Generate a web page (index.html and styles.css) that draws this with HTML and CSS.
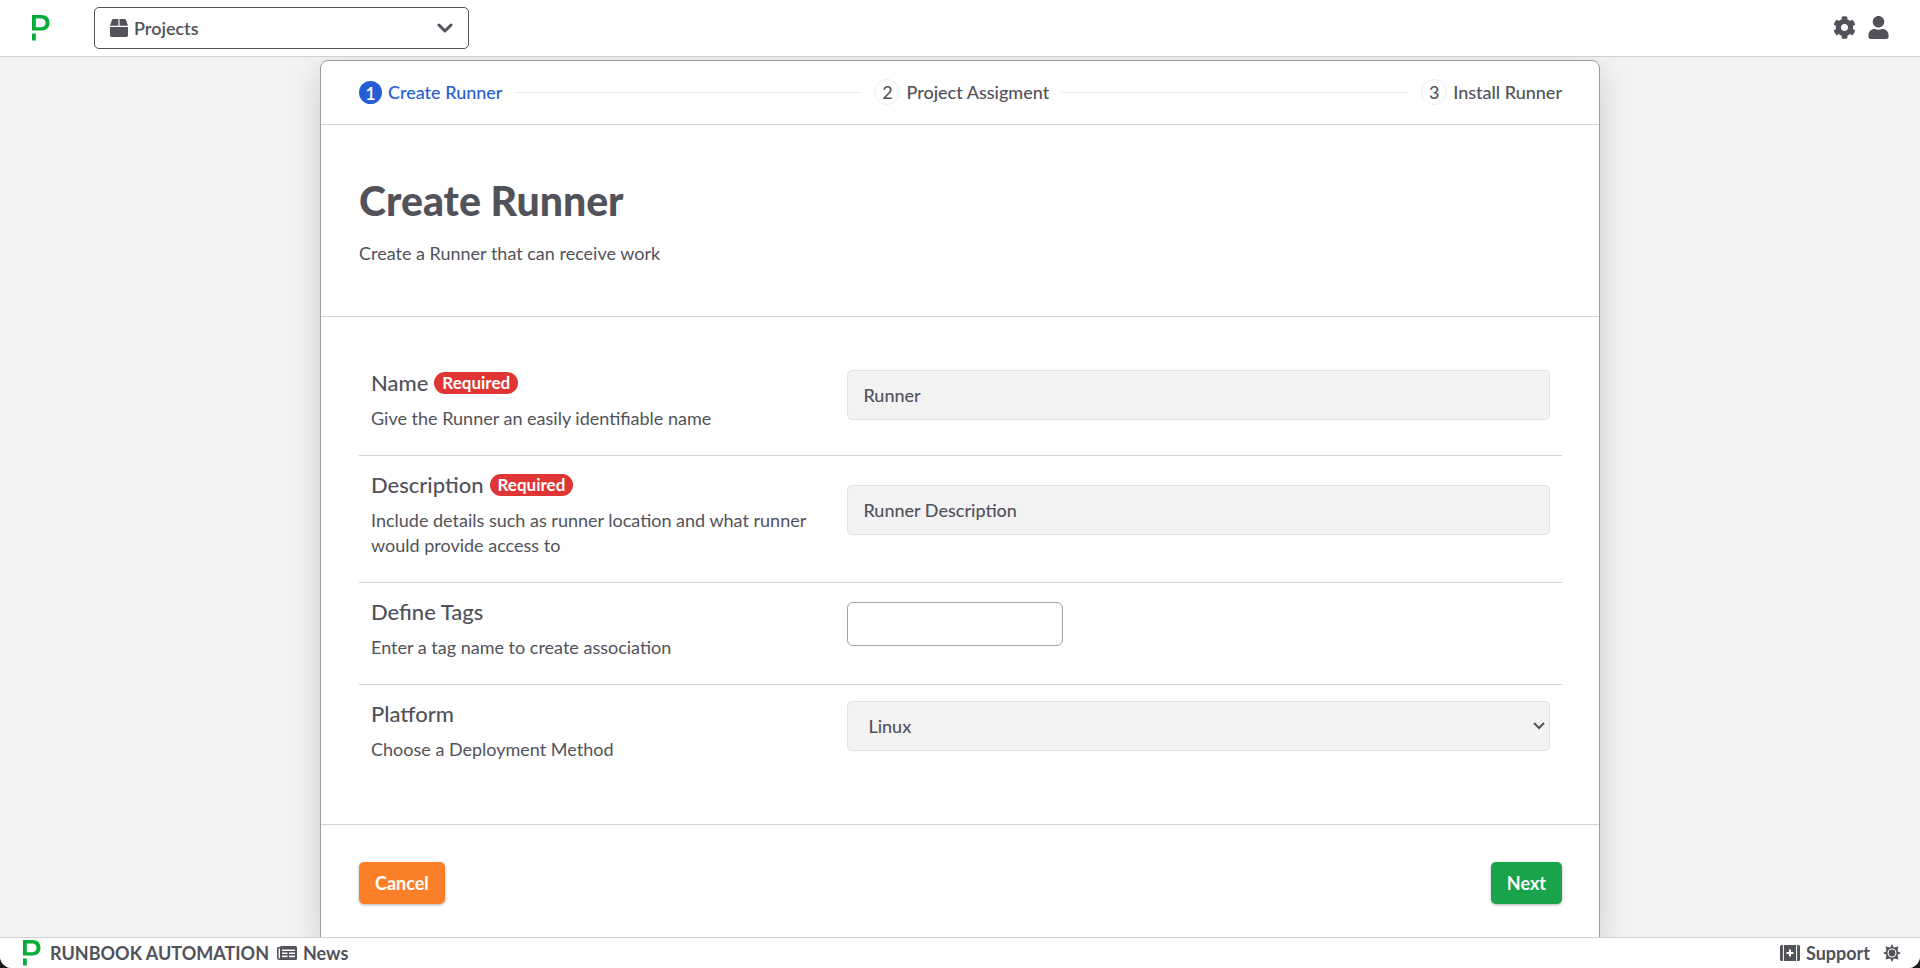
FILE: index.html
```html
<!DOCTYPE html>
<html lang="en">
<head>
<meta charset="utf-8">
<title>Create Runner</title>
<link rel="stylesheet" href="styles.css">
</head>
<body>
<div class="app">
  <header class="topbar">
    <a class="logo-link" href="#" aria-label="Home">
      <svg class="logo" viewBox="0 0 18 26" aria-hidden="true"><path fill-rule="evenodd" d="M0 0H9.5C14.5 0 17.5 3 17.5 7.8S14.5 15.5 9.5 15.5H0ZM3.8 3.4V12.2H9.2C12 12.2 13.6 10.6 13.6 7.8S12 3.4 9.2 3.4ZM0 18.5H3.8V25.5H0Z"/></svg>
    </a>
    <button class="project-picker" type="button">
      <svg class="icon-box" viewBox="0 0 512 512" aria-hidden="true"><path d="M509.5 184.6L458.9 32.8C452.4 13.2 434.1 0 413.4 0H272v192h238.7c-.4-2.5-.4-5-1.2-7.4zM240 0H98.6c-20.7 0-39 13.2-45.5 32.8L2.5 184.6c-.8 2.4-.8 4.9-1.2 7.4H240V0zM0 224v240c0 26.5 21.5 48 48 48h416c26.5 0 48-21.5 48-48V224H0z"/></svg>
      <span class="picker-label">Projects</span>
      <svg class="icon-chevron" viewBox="0 0 16 10" aria-hidden="true"><path d="M2 2l6 6 6-6"/></svg>
    </button>
    <nav class="top-actions">
      <a href="#" aria-label="Settings"><svg class="icon-top" viewBox="0 0 512 512" aria-hidden="true"><path d="M487.4 315.7l-42.6-24.6c4.3-23.2 4.3-47 0-70.2l42.6-24.6c4.9-2.8 7.1-8.6 5.5-14-11.1-35.6-30-67.8-54.7-94.6-3.8-4.1-10-5.1-14.8-2.3L380.8 110c-17.9-15.4-38.5-27.3-60.8-35.1V25.8c0-5.6-3.9-10.5-9.4-11.7-36.7-8.2-74.3-7.8-109.2 0-5.5 1.2-9.4 6.1-9.4 11.7V75c-22.2 7.9-42.8 19.8-60.8 35.1L88.7 85.5c-4.9-2.8-11-1.9-14.8 2.3-24.7 26.7-43.6 58.9-54.7 94.6-1.7 5.4.6 11.2 5.5 14L67.3 221c-4.3 23.2-4.3 47 0 70.2l-42.6 24.6c-4.9 2.8-7.1 8.6-5.5 14 11.1 35.6 30 67.8 54.7 94.6 3.8 4.1 10 5.1 14.8 2.3l42.6-24.6c17.9 15.4 38.5 27.3 60.8 35.1v49.2c0 5.6 3.9 10.5 9.4 11.7 36.7 8.2 74.3 7.8 109.2 0 5.5-1.2 9.4-6.1 9.4-11.7v-49.2c22.2-7.9 42.8-19.8 60.8-35.1l42.6 24.6c4.9 2.8 11 1.9 14.8-2.3 24.7-26.7 43.6-58.9 54.7-94.6 1.5-5.5-.7-11.3-5.6-14.1zM256 336c-44.1 0-80-35.9-80-80s35.9-80 80-80 80 35.9 80 80-35.9 80-80 80z"/></svg></a>
      <a href="#" aria-label="User"><svg class="icon-top" viewBox="-32 0 512 512" aria-hidden="true"><path d="M224 256c70.7 0 128-57.3 128-128S294.7 0 224 0 96 57.3 96 128s57.3 128 128 128zm89.6 32h-16.7c-22.2 10.2-46.9 16-72.9 16s-50.6-5.8-72.9-16h-16.7C60.2 288 0 348.2 0 422.4V464c0 26.5 21.5 48 48 48h352c26.5 0 48-21.5 48-48v-41.6c0-74.2-60.2-134.4-134.4-134.4z"/></svg></a>
    </nav>
  </header>

  <main class="content">
    <form class="card">
      <ol class="steps">
        <li class="step step-active"><span class="step-number">1</span>Create Runner</li>
        <li class="step-line" aria-hidden="true"></li>
        <li class="step"><span class="step-number">2</span>Project Assigment</li>
        <li class="step-line" aria-hidden="true"></li>
        <li class="step"><span class="step-number">3</span>Install Runner</li>
      </ol>
      <div class="intro">
        <h1 class="title">Create Runner</h1>
        <p class="subtitle">Create a Runner that can receive work</p>
      </div>
      <div class="fields">
        <div class="row">
          <div class="row-text">
            <label class="row-label" for="name">Name <span class="badge">Required</span></label>
            <p class="help">Give the Runner an easily identifiable name</p>
          </div>
          <div class="row-field"><input class="control" id="name" type="text" value="Runner"></div>
        </div>
        <div class="row">
          <div class="row-text">
            <label class="row-label" for="description">Description <span class="badge">Required</span></label>
            <p class="help">Include details such as runner location and what runner would provide access to</p>
          </div>
          <div class="row-field"><input class="control" id="description" type="text" value="Runner Description"></div>
        </div>
        <div class="row">
          <div class="row-text">
            <label class="row-label" for="tags">Define Tags</label>
            <p class="help">Enter a tag name to create association</p>
          </div>
          <div class="row-field"><input class="tag-input" id="tags" type="text"></div>
        </div>
        <div class="row">
          <div class="row-text">
            <label class="row-label" for="platform">Platform</label>
            <p class="help">Choose a Deployment Method</p>
          </div>
          <div class="row-field select-wrap">
            <select class="control control-select" id="platform"><option>Linux</option></select>
            <svg class="select-arrow" viewBox="0 0 12 8" aria-hidden="true"><path d="M1 1l5 5 5-5"/></svg>
          </div>
        </div>
      </div>
      <div class="actions">
        <button class="btn btn-cancel" type="button">Cancel</button>
        <button class="btn btn-next" type="button">Next</button>
      </div>
    </form>
  </main>

  <footer class="footer">
    <a class="footer-link brand" href="#">
      <svg class="logo" viewBox="0 0 18 26" aria-hidden="true"><path fill-rule="evenodd" d="M0 0H9.5C14.5 0 17.5 3 17.5 7.8S14.5 15.5 9.5 15.5H0ZM3.8 3.4V12.2H9.2C12 12.2 13.6 10.6 13.6 7.8S12 3.4 9.2 3.4ZM0 18.5H3.8V25.5H0Z"/></svg>
      RUNBOOK AUTOMATION
    </a>
    <a class="footer-link" href="#">
      <svg class="icon-wide" viewBox="0 0 20 14" aria-hidden="true"><path fill-rule="evenodd" d="M4.500 0H18.500Q20 0 20 1.500V12.500Q20 14 18.500 14H2.500Q0 14 0 11.500V2.500Q0 1 1.500 1H3Q3 0 4.500 0ZM1.600 2.500V11.500Q1.600 12.400 2.300 12.400Q3 12.400 3 11.500V2.500ZM5 3.600V5H18V3.600ZM5 6.500V7.900H10.500V6.500ZM12 6.500V7.900H18V6.500ZM5 9.600V11.200H10.500V9.600ZM12 9.600V11.200H18V9.600Z"/></svg>
      News
    </a>
    <a class="footer-link support" href="#">
      <svg class="icon-support" viewBox="0 0 20 16" aria-hidden="true"><path fill-rule="evenodd" d="M1.500 0H2.900V16H1.500Q0 16 0 14.500V1.500Q0 0 1.500 0ZM3.900 0H16.100V16H3.900ZM17.100 0H18.500Q20 0 20 1.500V14.500Q20 16 18.500 16H17.100ZM9 4.500V7H6.500V9H9V11.500H11V9H13.500V7H11V4.500Z"/></svg>
      Support
    </a>
    <button class="theme-toggle" type="button" aria-label="Theme">
      <svg class="icon-sun" viewBox="0 0 18 18" aria-hidden="true"><path fill-rule="evenodd" d="M9 0L10.800 3.400L15.400 2.600L14.600 7.200L18 9L14.600 10.800L15.400 15.400L10.800 14.600L9 18L7.200 14.600L2.600 15.400L3.400 10.800L0 9L3.400 7.200L2.600 2.600L7.200 3.400ZM9 4.500A4.500 4.500 0 1 0 9 13.500A4.500 4.500 0 1 0 9 4.500Z"/><circle cx="9" cy="9" r="3.400"/></svg>
    </button>
  </footer>
</div>
</body>
</html>
```
FILE: styles.css
```css
* { box-sizing: border-box; }
html { height: 100%; background: #1c1c1e; }
body {
  height: 100%;
  margin: 0;
  font-family: Lato, "Open Sans", sans-serif;
  font-size: 18px;
  line-height: 24px;
  color: #52525b;
}
a { color: inherit; text-decoration: none; }
button, input, select { font: inherit; color: inherit; }
button { cursor: pointer; }
svg { display: block; fill: currentColor; }

.app {
  display: flex;
  flex-direction: column;
  height: 100vh;
  overflow: hidden;
  border-radius: 0 0 12px 12px;
  background: #f3f3f3;
}

.topbar {
  display: flex;
  align-items: center;
  flex: none;
  padding: 7px 30px 7px 32px;
  border-bottom: 1px solid #d0d0d2;
  background: #fff;
}
.logo { width: 18px; height: 26px; fill: #06ac38; }
.project-picker {
  display: flex;
  align-items: center;
  width: 375px;
  height: 42px;
  margin-left: 44px;
  padding: 0 15px;
  border: 1px solid #52525b;
  border-radius: 5px;
  background: #fff;
  font-weight: 600;
}
.icon-box { width: 18px; height: 18px; margin-right: 6px; }
.picker-label { flex: 1; text-align: left; }
.icon-chevron { width: 16px; height: 10px; fill: none; stroke: currentColor; stroke-width: 3; stroke-linecap: round; stroke-linejoin: round; }
.top-actions { display: flex; gap: 11px; margin-left: auto; padding-bottom: 2px; }
.icon-top { width: 23px; height: 23px; }

.content { flex: 1; min-height: 0; overflow: hidden; padding-top: 3px; }
.card {
  max-width: 1280px;
  min-height: 100%;
  margin: 0 auto;
  border: 1px solid #9b9ba3;
  border-radius: 8px 8px 0 0;
  background: #fff;
  box-shadow: 0 10px 32px rgba(0, 0, 0, 0.16);
}

.steps {
  display: flex;
  align-items: center;
  gap: 12px;
  margin: 0;
  padding: 18px 37px 19px 38px;
  list-style: none;
  border-bottom: 1px solid #d1d1d6;
}
.step { display: flex; align-items: center; gap: 6px; font-weight: 500; }
.step-number {
  display: grid;
  place-items: center;
  width: 26px;
  height: 26px;
  border: 1px solid #ededef;
  border-radius: 50%;
}
.step-active { color: #275dd4; }
.step-active .step-number {
  width: 23px;
  height: 23px;
  border: 0;
  background: #275dd4;
  color: #fff;
  font-weight: 600;
}
.step-line { flex: 1; height: 1px; background: #ededef; }

.intro { padding: 52px 38px 51px; border-bottom: 1px solid #d1d1d6; }
.title { margin: 0; font-size: 41px; line-height: 48px; font-weight: 900; }
.subtitle { margin: 16px 0 0; }

.fields { padding: 37px 37px 38px 38px; border-bottom: 1px solid #d1d1d6; }
.row {
  display: grid;
  grid-template-columns: minmax(0, 2fr) minmax(0, 3fr);
  align-items: center;
  column-gap: 8px;
  padding: 16px 12px 0;
}
.row + .row { border-top: 1px solid #d1d1d6; }
.row-text { padding-bottom: 24px; }
.row-label { display: flex; align-items: center; gap: 6px; font-size: 22px; line-height: 26px; font-weight: 500; }
.badge {
  padding: 0 8px;
  border-radius: 11px;
  background: #df3535;
  color: #fff;
  font-size: 17px;
  line-height: 22px;
  font-weight: 700;
}
.help { margin: 10px 0 0; line-height: 25px; }
.row-field { padding-bottom: 35px; }
.control {
  display: block;
  width: 100%;
  height: 50px;
  padding: 0 15px;
  border: 1px solid #e2e2e4;
  border-radius: 5px;
  background: #f3f3f3;
  font-weight: 500;
}
.control-select { padding-left: 20px; appearance: none; }
.select-wrap { position: relative; }
.select-arrow {
  position: absolute;
  top: 21px;
  right: 5px;
  width: 12px;
  height: 8px;
  fill: none;
  stroke: currentColor;
  stroke-width: 2;
  pointer-events: none;
}
.tag-input {
  display: block;
  width: 216px;
  height: 44px;
  padding: 0 12px;
  border: 1px solid #9ca3af;
  border-radius: 6px;
  background: #fff;
}

.actions { display: flex; justify-content: space-between; padding: 37px 37px 37px 38px; }
.btn {
  height: 42px;
  padding: 0 16px;
  border: 0;
  border-radius: 5px;
  color: #fff;
  font-weight: 700;
  box-shadow: 0 1px 3px rgba(0, 0, 0, 0.3);
}
.btn-cancel { background: #fb7f28; }
.btn-next { background: #19a34a; }

.footer {
  display: flex;
  align-items: center;
  flex: none;
  height: 31px;
  padding: 0 19px 0 23px;
  border-top: 1px solid #d0d0d2;
  background: #fff;
  font-weight: 700;
}
.footer-link { display: flex; align-items: center; gap: 6px; }
.brand { gap: 9px; margin-right: 8px; }
.icon-wide { width: 20px; height: 14px; }
.icon-support { width: 20px; height: 16px; }
.support { margin-left: auto; }
.theme-toggle { margin-left: 13px; padding: 0; border: 0; background: none; color: inherit; }
.icon-sun { width: 18px; height: 18px; }
```
